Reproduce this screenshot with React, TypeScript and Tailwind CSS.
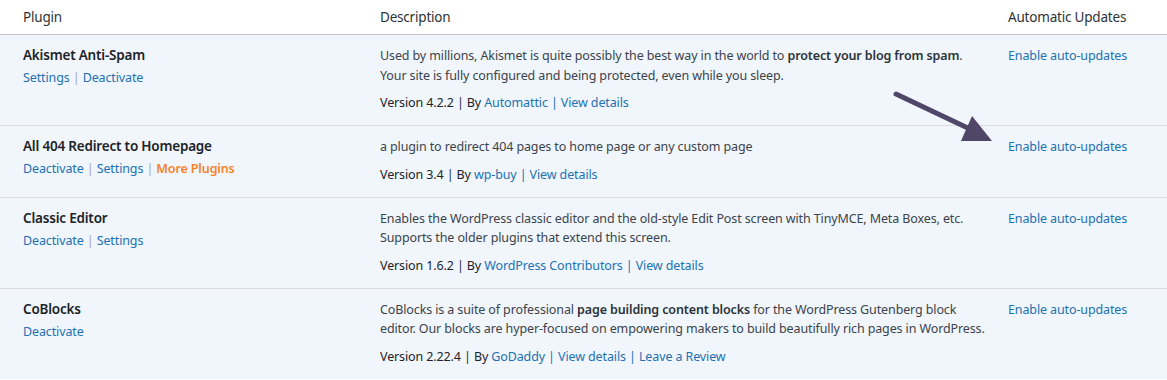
import React from "react";

const link = "text-[#2271b1]";
const sep = <span className="text-[#a7aaad]"> | </span>;
const vsep = <span className="text-[#2c3338]"> | </span>;
const body = "text-[12.5px] tracking-[-0.12px] leading-[19.5px]";

function Row({
  title,
  actions,
  desc,
  version,
  last,
}: {
  title: string;
  actions: React.ReactNode;
  desc: React.ReactNode;
  version: React.ReactNode;
  last?: boolean;
}) {
  return (
    <div
      className={
        "flex bg-[#f0f6fc] " + (last ? "" : "border-b border-[#dcdcde]")
      }
    >
      <div className="w-[370px] shrink-0 pl-[23px] pt-[11px]">
        <div className="text-[13.5px] tracking-[-0.2px] leading-[19.5px] font-semibold text-[#1d2327]">
          {title}
        </div>
        <div className={"mt-[2.5px] " + body}>{actions}</div>
      </div>
      <div className="w-[628px] shrink-0 pl-[10px] pt-[11px] pb-[12.25px]">
        <div className={"text-[#3c434a] whitespace-nowrap " + body}>
          {desc}
        </div>
        <div className={"mt-[8.25px] text-[#1d2327] whitespace-nowrap " + body}>
          {version}
        </div>
      </div>
      <div className="flex-1 pl-[10px] pt-[11px]">
        <div className={body + " " + link}>Enable auto-updates</div>
      </div>
    </div>
  );
}

export default function App() {
  return (
    <div
      className="relative w-[1167px] h-[380px] overflow-hidden bg-white"
      style={{ fontFamily: '"Noto Sans", "Open Sans", sans-serif' }}
    >
      <div className="flex h-[35px] items-center border-b border-[#c3c4c7] text-[13.5px] tracking-[-0.2px] text-[#2c3338]">
        <div className="w-[370px] shrink-0 pl-[23px]">Plugin</div>
        <div className="w-[628px] shrink-0 pl-[10px]">Description</div>
        <div className="flex-1 pl-[10px]">Automatic Updates</div>
      </div>

      <Row
        title="Akismet Anti-Spam"
        actions={
          <>
            <span className={link}>Settings</span>
            {sep}
            <span className={link}>Deactivate</span>
          </>
        }
        desc={
          <>
            Used by millions, Akismet is quite possibly the best way in the
            world to{" "}
            <span className="font-semibold text-[#2c3338]">
              protect your blog from spam
            </span>
            .
            <br />
            Your site is fully configured and being protected, even while you
            sleep.
          </>
        }
        version={
          <>
            Version 4.2.2{vsep}By <span className={link}>Automattic</span>
            <span className="text-[#2271b1]"> | </span>
            <span className={link}>View details</span>
          </>
        }
      />
      <Row
        title="All 404 Redirect to Homepage"
        actions={
          <>
            <span className={link}>Deactivate</span>
            {sep}
            <span className={link}>Settings</span>
            {sep}
            <span className="font-semibold text-[#f5832a]">More Plugins</span>
          </>
        }
        desc={<>a plugin to redirect 404 pages to home page or any custom page</>}
        version={
          <>
            Version 3.4{vsep}By <span className={link}>wp-buy</span>
            <span className="text-[#2271b1]"> | </span>
            <span className={link}>View details</span>
          </>
        }
      />
      <Row
        title="Classic Editor"
        actions={
          <>
            <span className={link}>Deactivate</span>
            {sep}
            <span className={link}>Settings</span>
          </>
        }
        desc={
          <>
            Enables the WordPress classic editor and the old-style Edit Post
            screen with TinyMCE, Meta Boxes, etc.
            <br />
            Supports the older plugins that extend this screen.
          </>
        }
        version={
          <>
            Version 1.6.2{vsep}By{" "}
            <span className={link}>WordPress Contributors</span>
            <span className="text-[#2271b1]"> | </span>
            <span className={link}>View details</span>
          </>
        }
      />
      <Row
        last
        title="CoBlocks"
        actions={<span className={link}>Deactivate</span>}
        desc={
          <>
            CoBlocks is a suite of professional{" "}
            <span className="font-semibold text-[#2c3338]">
              page building content blocks
            </span>{" "}
            for the WordPress Gutenberg block
            <br />
            editor. Our blocks are hyper-focused on empowering makers to build
            beautifully rich pages in WordPress.
          </>
        }
        version={
          <>
            Version 2.22.4{vsep}By <span className={link}>GoDaddy</span>
            <span className="text-[#2271b1]"> | </span>
            <span className={link}>View details</span>
            <span className="text-[#2271b1]"> | </span>
            <span className={link}>Leave a Review</span>
          </>
        }
      />

      <svg
        className="pointer-events-none absolute left-0 top-0"
        width="1167"
        height="380"
        viewBox="0 0 1167 380"
      >
        <line
          x1="896"
          y1="94"
          x2="972"
          y2="130"
          stroke="#4f4668"
          strokeWidth="5"
          strokeLinecap="round"
        />
        <polygon points="972,116 961,141 992,141" fill="#4f4668" />
      </svg>
    </div>
  );
}
